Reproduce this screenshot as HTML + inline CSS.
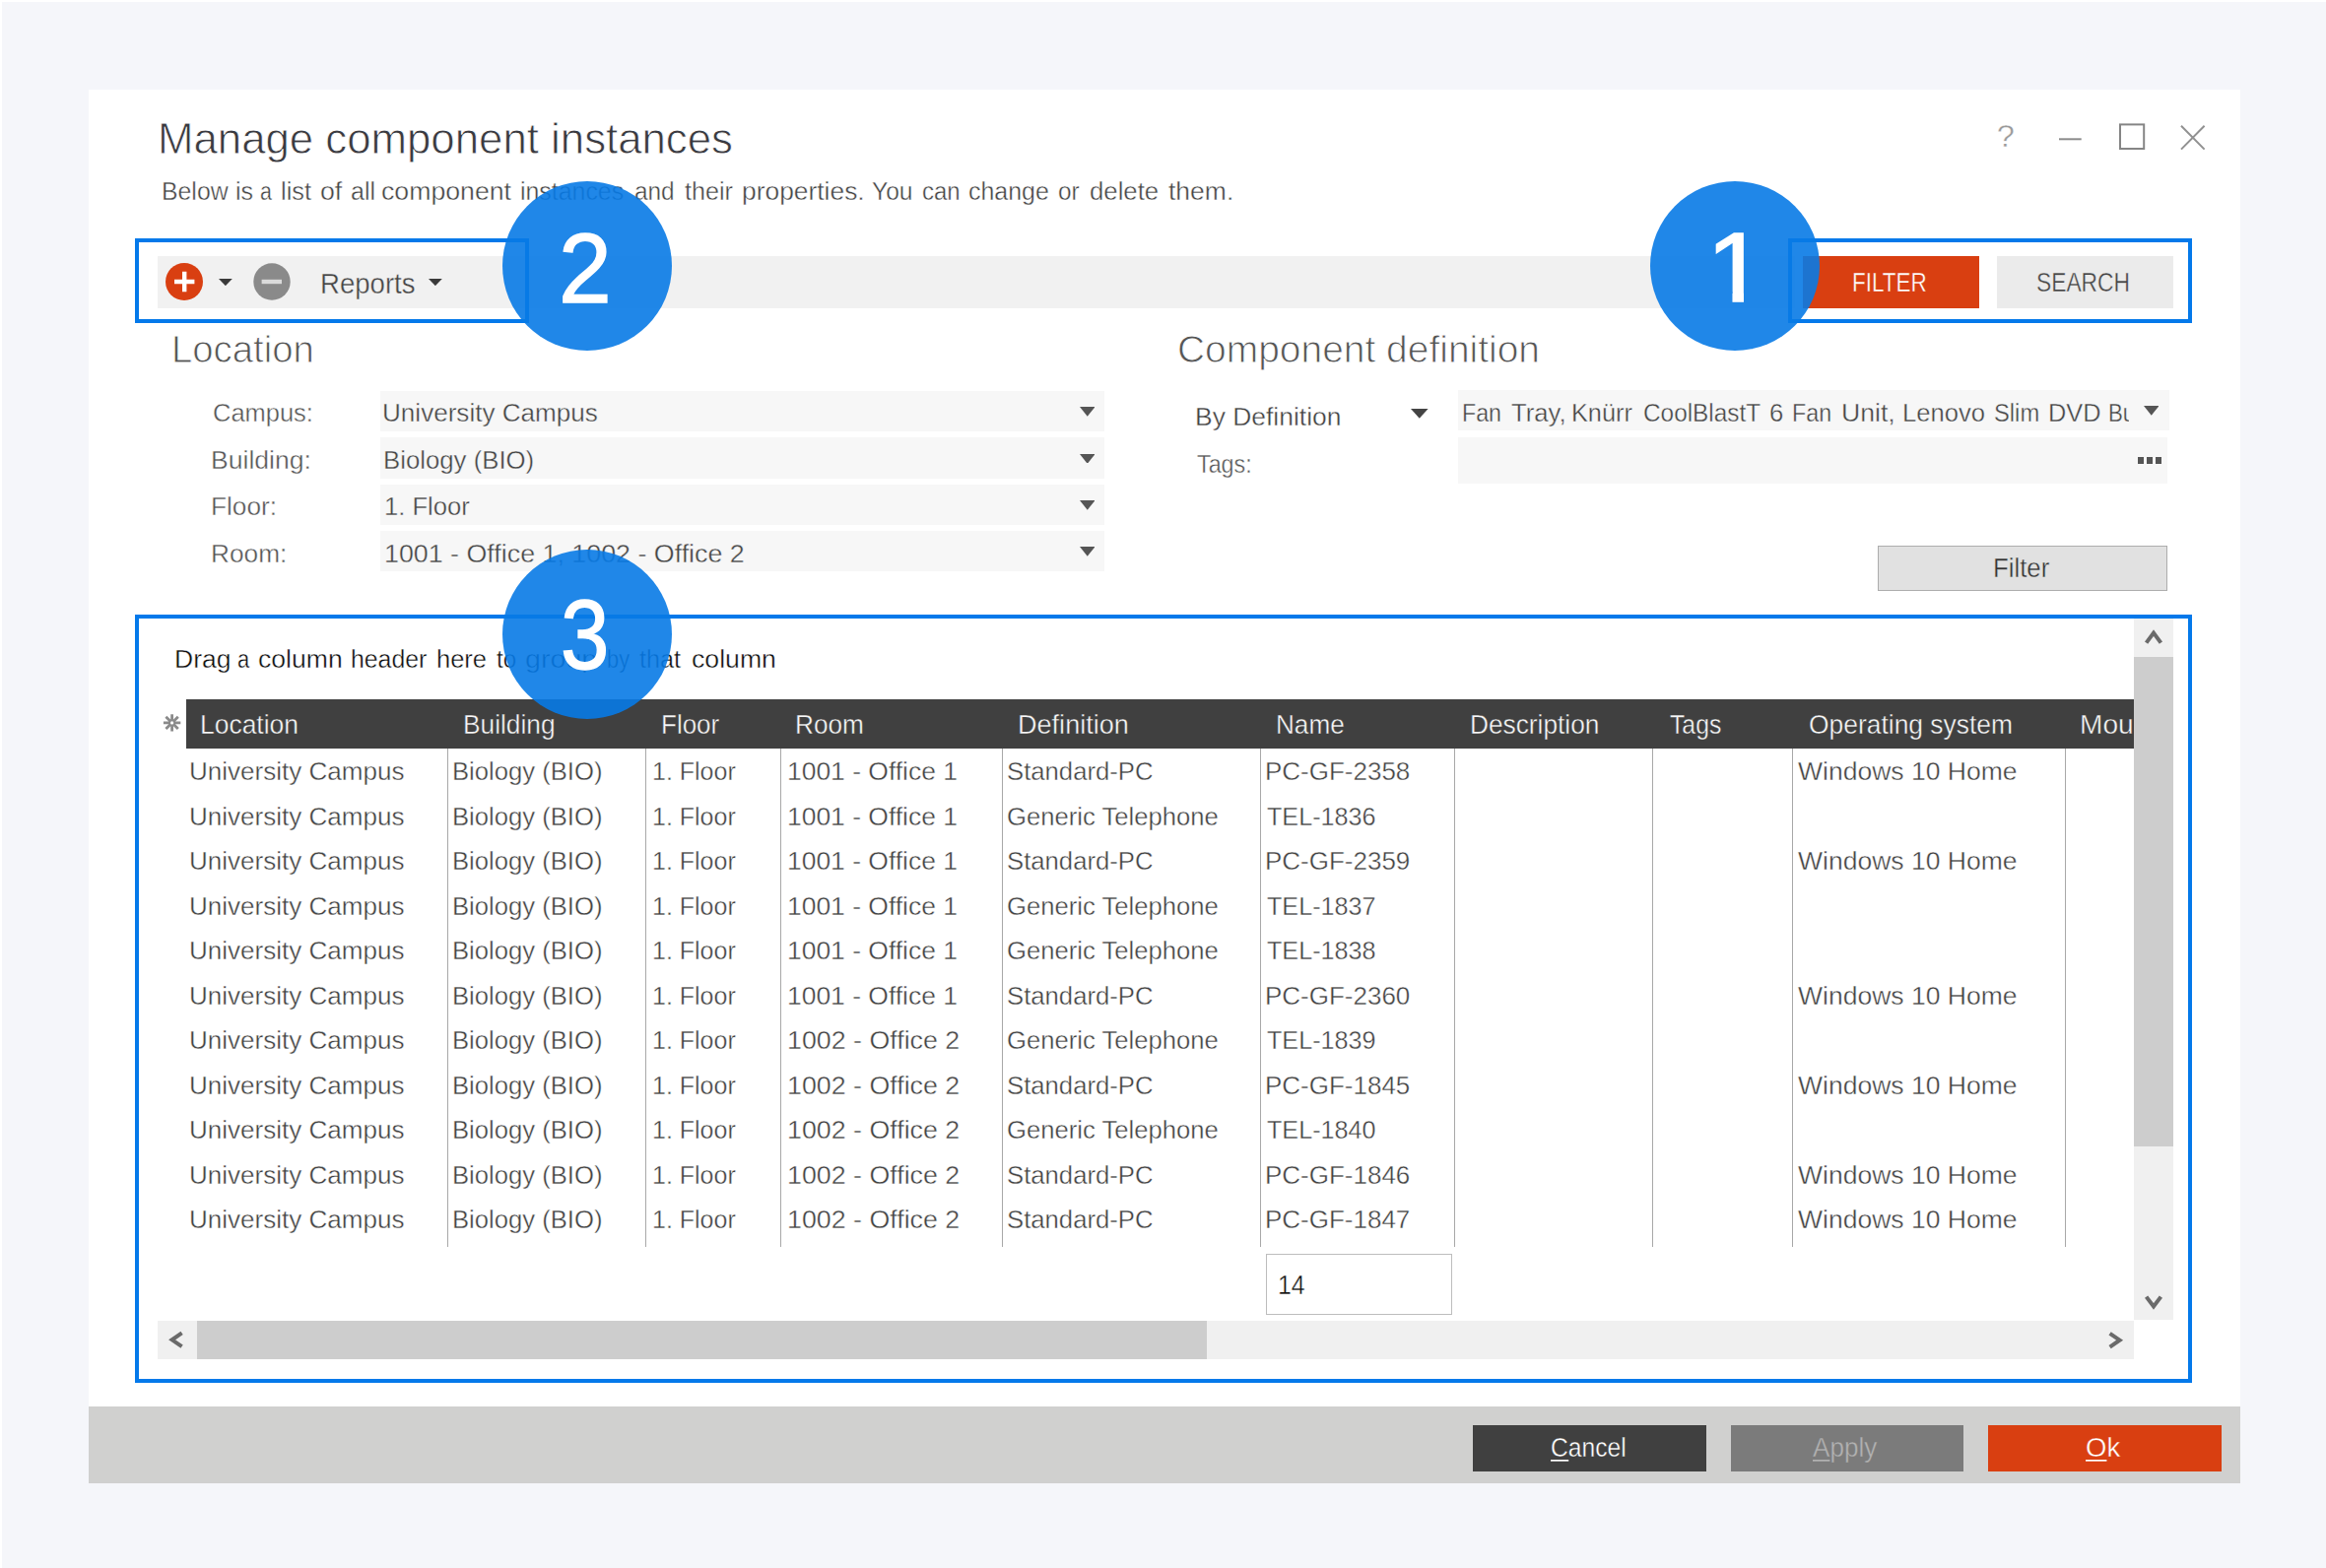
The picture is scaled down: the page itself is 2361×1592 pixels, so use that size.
<!DOCTYPE html>
<html lang="en"><head><meta charset="utf-8"><title>Manage component instances</title>
<style>html,body{margin:0;padding:0}body{width:2361px;height:1592px;position:relative;overflow:hidden;background:#f5f6fa;font-family:"Liberation Sans", sans-serif;-webkit-font-smoothing:antialiased}.b{position:absolute;display:block}.t{position:absolute;display:block;white-space:pre;line-height:1;transform-origin:0 0;text-underline-offset:2px}.u{background:linear-gradient(currentColor,currentColor) no-repeat 0 calc(100% - 1.4px)/100% 1.7px}</style></head>
<body>
<div class="b" style="left:0.0px;top:0.0px;width:2361.0px;height:2.3px;background:#fff;"></div>
<div class="b" style="left:0.0px;top:0.0px;width:2.0px;height:1592.0px;background:#fff;"></div>
<div class="b" style="left:90.0px;top:91.0px;width:2184.0px;height:1415.0px;background:#fff;"></div>
<div class="b" style="left:90.0px;top:1428.0px;width:2184.0px;height:78.0px;background:#d0d0cf;"></div>
<div class="b" style="left:160.0px;top:260.0px;width:1662.0px;height:53.0px;background:#f1f1f1;"></div>
<div class="b" style="left:1830.3px;top:260.0px;width:178.3px;height:52.8px;background:#d93f11;"></div>
<div class="b" style="left:2027.3px;top:260.0px;width:178.5px;height:53.0px;background:#ebebeb;"></div>
<svg class="b" style="left:166px;top:265px" width="132" height="42" viewBox="166 265 132 42"><circle cx="187" cy="286" r="19" fill="#d93f11"/><path d="M177 286H197.4M187.2 275.8V296.2" stroke="#fff" stroke-width="4.4" fill="none"/><circle cx="276" cy="286" r="18.7" fill="#8a8a8a"/><path d="M265.6 286H286" stroke="#dadada" stroke-width="4.4" fill="none"/></svg>
<svg class="b" style="left:222.4px;top:283.0px" width="13.8" height="7.2" viewBox="0 0 13.8 7.2"><path d="M0 0H13.8L6.90 7.2Z" fill="#3a3a3a"/></svg>
<svg class="b" style="left:434.8px;top:283.0px" width="13.8" height="7.2" viewBox="0 0 13.8 7.2"><path d="M0 0H13.8L6.90 7.2Z" fill="#3a3a3a"/></svg>
<svg class="b" style="left:2080px;top:118px" width="170" height="42" viewBox="2080 118 170 42" fill="none" stroke-width="2"><path d="M2090 141.3H2112.7" stroke="#8c8c8c"/><rect x="2152" y="126.4" width="24.2" height="24.6" stroke="#858585"/><path d="M2214 127.8L2237.6 151.6M2237.6 127.8L2214 151.6" stroke="#919191"/></svg>
<div class="b" style="left:386.0px;top:396.6px;width:735.2px;height:41.3px;background:#f7f7f7;"></div>
<svg class="b" style="left:1095.5px;top:412.9px" width="15.5" height="9.8" viewBox="0 0 15.5 9.8"><path d="M0 0H15.5L7.75 9.8Z" fill="#555"/></svg>
<div class="b" style="left:386.0px;top:444.3px;width:735.2px;height:41.3px;background:#f7f7f7;"></div>
<svg class="b" style="left:1095.5px;top:460.6px" width="15.5" height="9.8" viewBox="0 0 15.5 9.8"><path d="M0 0H15.5L7.75 9.8Z" fill="#555"/></svg>
<div class="b" style="left:386.0px;top:491.5px;width:735.2px;height:41.3px;background:#f7f7f7;"></div>
<svg class="b" style="left:1095.5px;top:507.8px" width="15.5" height="9.8" viewBox="0 0 15.5 9.8"><path d="M0 0H15.5L7.75 9.8Z" fill="#555"/></svg>
<div class="b" style="left:386.0px;top:538.7px;width:735.2px;height:41.3px;background:#f7f7f7;"></div>
<svg class="b" style="left:1095.5px;top:555.0px" width="15.5" height="9.8" viewBox="0 0 15.5 9.8"><path d="M0 0H15.5L7.75 9.8Z" fill="#555"/></svg>
<div class="b" style="left:1479.8px;top:396.2px;width:721.9px;height:41.3px;background:#f7f7f7;"></div>
<svg class="b" style="left:2175.9px;top:412.2px" width="15.5" height="9.8" viewBox="0 0 15.5 9.8"><path d="M0 0H15.5L7.75 9.8Z" fill="#555"/></svg>
<svg class="b" style="left:1432.0px;top:415.4px" width="17.6" height="9.8" viewBox="0 0 17.6 9.8"><path d="M0 0H17.6L8.80 9.8Z" fill="#444"/></svg>
<div class="b" style="left:1479.8px;top:444.0px;width:720.6px;height:46.9px;background:#f7f7f7;"></div>
<div class="b" style="left:2169.6px;top:463.8px;width:6.6px;height:7.0px;background:#555;"></div>
<div class="b" style="left:2178.7px;top:463.8px;width:6.6px;height:7.0px;background:#555;"></div>
<div class="b" style="left:2187.8px;top:463.8px;width:6.6px;height:7.0px;background:#555;"></div>
<div class="b" style="left:1479.8px;top:396.2px;width:680.8px;height:41.3px;overflow:hidden"><span class="t" style="-webkit-text-stroke:0.38px #f7f7f7;left:659.9px;top:9.8px;font-size:26.5px;color:#444;transform:scaleX(0.8400)">Burner</span></div>
<div class="b" style="left:1906.3px;top:554.1px;width:293.6px;height:46.4px;background:#e1e1e1;box-sizing:border-box;border:1.6px solid #adadad"></div>
<div class="b" style="left:188.9px;top:709.5px;width:1977.1px;height:50.3px;background:#404040;overflow:hidden"><span class="t" style="-webkit-text-stroke:0.38px #404040;left:1922.2px;top:13.5px;font-size:27px;color:#f6f6f6;transform:scaleX(1.0403)">Mount</span></div>
<svg class="b" style="left:164px;top:723px" width="22" height="22" viewBox="164 723 22 22"><g stroke="#8a8a8a" stroke-width="2.8" fill="none"><path d="M174.6 725.2V742.6M165.9 733.9H183.3M168.4 727.7L180.8 740.1M180.8 727.7L168.4 740.1"/></g><circle cx="174.6" cy="733.9" r="1.6" fill="#fff"/></svg>
<div class="b" style="left:454.0px;top:759.8px;width:1.3px;height:506.6px;background:#a8a8a8;"></div>
<div class="b" style="left:655.0px;top:759.8px;width:1.3px;height:506.6px;background:#a8a8a8;"></div>
<div class="b" style="left:792.0px;top:759.8px;width:1.3px;height:506.6px;background:#a8a8a8;"></div>
<div class="b" style="left:1017.0px;top:759.8px;width:1.3px;height:506.6px;background:#a8a8a8;"></div>
<div class="b" style="left:1279.0px;top:759.8px;width:1.3px;height:506.6px;background:#a8a8a8;"></div>
<div class="b" style="left:1476.0px;top:759.8px;width:1.3px;height:506.6px;background:#a8a8a8;"></div>
<div class="b" style="left:1677.0px;top:759.8px;width:1.3px;height:506.6px;background:#a8a8a8;"></div>
<div class="b" style="left:1819.0px;top:759.8px;width:1.3px;height:506.6px;background:#a8a8a8;"></div>
<div class="b" style="left:2096.0px;top:759.8px;width:1.3px;height:506.6px;background:#a8a8a8;"></div>
<div class="b" style="left:1284.5px;top:1272.5px;width:189.2px;height:62.3px;background:#fff;box-sizing:border-box;border:1.6px solid #bdbdbd"></div>
<div class="b" style="left:2166.0px;top:628.0px;width:39.7px;height:711.5px;background:#f0f0f0;"></div>
<div class="b" style="left:2166.0px;top:667.3px;width:39.7px;height:497.1px;background:#cdcdcd;"></div>
<div class="b" style="left:160.4px;top:1340.5px;width:2005.6px;height:39.5px;background:#f0f0f0;"></div>
<div class="b" style="left:199.6px;top:1340.5px;width:1025.4px;height:39.5px;background:#cdcdcd;"></div>
<svg class="b" style="left:2170px;top:632px" width="32" height="30" viewBox="2170 632 32 30"><path d="M2178.6 652.6L2186 642.6L2193.4 652.6" stroke="#6a6a6a" stroke-width="4" fill="none"/></svg>
<svg class="b" style="left:2170px;top:1308px" width="32" height="30" viewBox="2170 1308 32 30"><path d="M2178.6 1316.6L2186 1326.4L2193.4 1316.6" stroke="#6a6a6a" stroke-width="4" fill="none"/></svg>
<svg class="b" style="left:165px;top:1345px" width="30" height="32" viewBox="165 1345 30 32"><path d="M184.6 1353.4L174.6 1360.3L184.6 1367.2" stroke="#6a6a6a" stroke-width="4" fill="none"/></svg>
<svg class="b" style="left:2130px;top:1345px" width="32" height="32" viewBox="2130 1345 32 32"><path d="M2141.6 1353.8L2151.6 1360.7L2141.6 1367.6" stroke="#6a6a6a" stroke-width="4" fill="none"/></svg>
<div class="b" style="left:1495.0px;top:1447.0px;width:236.6px;height:47.0px;background:#404040;"></div>
<div class="b" style="left:1756.9px;top:1447.0px;width:236.5px;height:47.0px;background:#7b7b7b;"></div>
<div class="b" style="left:2018.0px;top:1447.0px;width:236.9px;height:47.0px;background:#d93f11;"></div>
<span class="t" style="-webkit-text-stroke:0.8px #fff;left:160.3px;top:119px;font-size:44px;color:#3a3a40;transform:scaleX(0.9948)">Manage component instances</span>
<span class="t" style="-webkit-text-stroke:0.38px #fff;left:163.5px;top:182px;font-size:25.4px;color:#444;transform:scaleX(0.9776)">Below</span>
<span class="t" style="-webkit-text-stroke:0.38px #fff;left:239.3px;top:182px;font-size:25.4px;color:#444;transform:scaleX(0.9855)">is</span>
<span class="t" style="-webkit-text-stroke:0.38px #fff;left:263.8px;top:182px;font-size:25.4px;color:#444;transform:scaleX(0.8400)">a</span>
<span class="t" style="-webkit-text-stroke:0.38px #fff;left:284.9px;top:182px;font-size:25.4px;color:#444;transform:scaleX(0.9974)">list</span>
<span class="t" style="-webkit-text-stroke:0.38px #fff;left:324.9px;top:182px;font-size:25.4px;color:#444;transform:scaleX(1.0511)">of</span>
<span class="t" style="-webkit-text-stroke:0.38px #fff;left:355.5px;top:182px;font-size:25.4px;color:#444;transform:scaleX(0.9841)">all</span>
<span class="t" style="-webkit-text-stroke:0.38px #fff;left:387.0px;top:182px;font-size:25.4px;color:#444;transform:scaleX(1.0508)">component</span>
<span class="t" style="-webkit-text-stroke:0.38px #fff;left:528.0px;top:182px;font-size:25.4px;color:#444;transform:scaleX(0.9804)">instances</span>
<span class="t" style="-webkit-text-stroke:0.38px #fff;left:644.0px;top:182px;font-size:25.4px;color:#444;transform:scaleX(0.9592)">and</span>
<span class="t" style="-webkit-text-stroke:0.38px #fff;left:695.0px;top:182px;font-size:25.4px;color:#444;transform:scaleX(0.9892)">their</span>
<span class="t" style="-webkit-text-stroke:0.38px #fff;left:753.3px;top:182px;font-size:25.4px;color:#444;transform:scaleX(1.0393)">properties.</span>
<span class="t" style="-webkit-text-stroke:0.38px #fff;left:885.3px;top:182px;font-size:25.4px;color:#444;transform:scaleX(0.9682)">You</span>
<span class="t" style="-webkit-text-stroke:0.38px #fff;left:935.5px;top:182px;font-size:25.4px;color:#444;transform:scaleX(0.9429)">can</span>
<span class="t" style="-webkit-text-stroke:0.38px #fff;left:983.3px;top:182px;font-size:25.4px;color:#444;transform:scaleX(0.9818)">change</span>
<span class="t" style="-webkit-text-stroke:0.38px #fff;left:1074.3px;top:182px;font-size:25.4px;color:#444;transform:scaleX(0.9584)">or</span>
<span class="t" style="-webkit-text-stroke:0.38px #fff;left:1106.0px;top:182px;font-size:25.4px;color:#444;transform:scaleX(1.0140)">delete</span>
<span class="t" style="-webkit-text-stroke:0.38px #fff;left:1185.8px;top:182px;font-size:25.4px;color:#444;transform:scaleX(1.0432)">them.</span>
<span class="t" style="-webkit-text-stroke:0.38px #f1f1f1;left:325.1px;top:274px;font-size:29px;color:#444;transform:scaleX(0.9511)">Reports</span>
<span class="t" style="-webkit-text-stroke:0.38px #d93f11;left:1880.0px;top:274px;font-size:26.8px;color:#fff;transform:scaleX(0.8400)">FILTER</span>
<span class="t" style="-webkit-text-stroke:0.38px #ebebeb;left:2067.1px;top:274px;font-size:26.8px;color:#444;transform:scaleX(0.8507)">SEARCH</span>
<span class="t" style="-webkit-text-stroke:0.9px #fff;left:174.0px;top:336px;font-size:38.5px;color:#555;transform:scaleX(0.9947)">Location</span>
<span class="t" style="-webkit-text-stroke:0.9px #fff;left:1195.0px;top:336px;font-size:38.5px;color:#555;transform:scaleX(1.0113)">Component definition</span>
<span class="t" style="-webkit-text-stroke:0.38px #fff;left:215.8px;top:406px;font-size:26.5px;color:#555;transform:scaleX(0.9613)">Campus:</span>
<span class="t" style="-webkit-text-stroke:0.38px #fff;left:214.3px;top:454px;font-size:26.5px;color:#555;transform:scaleX(1.0022)">Building:</span>
<span class="t" style="-webkit-text-stroke:0.38px #fff;left:214.3px;top:501px;font-size:26.5px;color:#555;transform:scaleX(0.9893)">Floor:</span>
<span class="t" style="-webkit-text-stroke:0.38px #fff;left:214.3px;top:549px;font-size:26.5px;color:#555;transform:scaleX(0.9907)">Room:</span>
<span class="t" style="-webkit-text-stroke:0.38px #f7f7f7;left:388.4px;top:406px;font-size:26.5px;color:#444;transform:scaleX(0.9840)">University Campus</span>
<span class="t" style="-webkit-text-stroke:0.38px #f7f7f7;left:388.5px;top:454px;font-size:26.5px;color:#444;transform:scaleX(0.9719)">Biology (BIO)</span>
<span class="t" style="-webkit-text-stroke:0.38px #f7f7f7;left:389.6px;top:501px;font-size:26.5px;color:#444;transform:scaleX(0.9658)">1. Floor</span>
<span class="t" style="-webkit-text-stroke:0.38px #f7f7f7;left:389.5px;top:549px;font-size:26.5px;color:#444;transform:scaleX(1.0121)">1001 - Office 1, 1002 - Office 2</span>
<span class="t" style="-webkit-text-stroke:0.38px #fff;left:1213.4px;top:410px;font-size:26.5px;color:#404040;transform:scaleX(0.9978)">By Definition</span>
<span class="t" style="-webkit-text-stroke:0.38px #fff;left:1215.4px;top:458px;font-size:26.5px;color:#555;transform:scaleX(0.8790)">Tags:</span>
<span class="t" style="-webkit-text-stroke:0.38px #f7f7f7;left:1483.7px;top:406px;font-size:26.5px;color:#444;transform:scaleX(0.8759)">Fan</span>
<span class="t" style="-webkit-text-stroke:0.38px #f7f7f7;left:1533.7px;top:406px;font-size:26.5px;color:#444;transform:scaleX(0.9682)">Tray,</span>
<span class="t" style="-webkit-text-stroke:0.38px #f7f7f7;left:1595.0px;top:406px;font-size:26.5px;color:#444;transform:scaleX(0.9543)">Knürr</span>
<span class="t" style="-webkit-text-stroke:0.38px #f7f7f7;left:1667.6px;top:406px;font-size:26.5px;color:#444;transform:scaleX(0.9189)">CoolBlastT</span>
<span class="t" style="-webkit-text-stroke:0.38px #f7f7f7;left:1796.0px;top:406px;font-size:26.5px;color:#444;transform:scaleX(0.9692)">6</span>
<span class="t" style="-webkit-text-stroke:0.38px #f7f7f7;left:1819.2px;top:406px;font-size:26.5px;color:#444;transform:scaleX(0.8783)">Fan</span>
<span class="t" style="-webkit-text-stroke:0.38px #f7f7f7;left:1868.7px;top:406px;font-size:26.5px;color:#444;transform:scaleX(1.0035)">Unit,</span>
<span class="t" style="-webkit-text-stroke:0.38px #f7f7f7;left:1930.5px;top:406px;font-size:26.5px;color:#444;transform:scaleX(0.9655)">Lenovo</span>
<span class="t" style="-webkit-text-stroke:0.38px #f7f7f7;left:2024.1px;top:406px;font-size:26.5px;color:#444;transform:scaleX(0.8959)">Slim</span>
<span class="t" style="-webkit-text-stroke:0.38px #f7f7f7;left:2078.6px;top:406px;font-size:26.5px;color:#444;transform:scaleX(0.9562)">DVD</span>
<span class="t" style="-webkit-text-stroke:0.38px #e1e1e1;left:2023.1px;top:564px;font-size:26.8px;color:#333;transform:scaleX(0.9614)">Filter</span>
<span class="t" style="-webkit-text-stroke:0.38px #fff;left:176.9px;top:656px;font-size:26px;color:#0c0c0c;transform:scaleX(1.0190)">Drag</span>
<span class="t" style="-webkit-text-stroke:0.38px #fff;left:240.9px;top:656px;font-size:26px;color:#0c0c0c;transform:scaleX(0.8400)">a</span>
<span class="t" style="-webkit-text-stroke:0.38px #fff;left:262.4px;top:656px;font-size:26px;color:#0c0c0c;transform:scaleX(1.0227)">column</span>
<span class="t" style="-webkit-text-stroke:0.38px #fff;left:356.4px;top:656px;font-size:26px;color:#0c0c0c;transform:scaleX(0.9552)">header</span>
<span class="t" style="-webkit-text-stroke:0.38px #fff;left:443.1px;top:656px;font-size:26px;color:#0c0c0c;transform:scaleX(0.9807)">here</span>
<span class="t" style="-webkit-text-stroke:0.38px #fff;left:503.7px;top:656px;font-size:26px;color:#0c0c0c;transform:scaleX(0.9329)">to</span>
<span class="t" style="-webkit-text-stroke:0.38px #fff;left:533.2px;top:656px;font-size:26px;color:#0c0c0c;transform:scaleX(1.1024)">group</span>
<span class="t" style="-webkit-text-stroke:0.38px #fff;left:615.8px;top:656px;font-size:26px;color:#0c0c0c;transform:scaleX(0.8400)">by</span>
<span class="t" style="-webkit-text-stroke:0.38px #fff;left:649.4px;top:656px;font-size:26px;color:#0c0c0c;transform:scaleX(0.9696)">that</span>
<span class="t" style="-webkit-text-stroke:0.38px #fff;left:702.0px;top:656px;font-size:26px;color:#0c0c0c;transform:scaleX(1.0251)">column</span>
<span class="t" style="-webkit-text-stroke:0.38px #404040;left:202.5px;top:723px;font-size:27px;color:#f6f6f6;transform:scaleX(0.9792)">Location</span>
<span class="t" style="-webkit-text-stroke:0.38px #404040;left:470.1px;top:723px;font-size:27px;color:#f6f6f6;transform:scaleX(0.9736)">Building</span>
<span class="t" style="-webkit-text-stroke:0.38px #404040;left:671.1px;top:723px;font-size:27px;color:#f6f6f6;transform:scaleX(0.9626)">Floor</span>
<span class="t" style="-webkit-text-stroke:0.38px #404040;left:807.4px;top:723px;font-size:27px;color:#f6f6f6;transform:scaleX(0.9704)">Room</span>
<span class="t" style="-webkit-text-stroke:0.38px #404040;left:1033.2px;top:723px;font-size:27px;color:#f6f6f6;transform:scaleX(1.0023)">Definition</span>
<span class="t" style="-webkit-text-stroke:0.38px #404040;left:1295.1px;top:723px;font-size:27px;color:#f6f6f6;transform:scaleX(0.9680)">Name</span>
<span class="t" style="-webkit-text-stroke:0.38px #404040;left:1492.1px;top:723px;font-size:27px;color:#f6f6f6;transform:scaleX(0.9732)">Description</span>
<span class="t" style="-webkit-text-stroke:0.38px #404040;left:1694.7px;top:723px;font-size:27px;color:#f6f6f6;transform:scaleX(0.9163)">Tags</span>
<span class="t" style="-webkit-text-stroke:0.38px #404040;left:1835.8px;top:723px;font-size:27px;color:#f6f6f6;transform:scaleX(0.9785)">Operating system</span>
<span class="t" style="-webkit-text-stroke:0.38px #fff;left:191.8px;top:770px;font-size:26.5px;color:#424242;transform:scaleX(0.9827)">University Campus</span>
<span class="t" style="-webkit-text-stroke:0.38px #fff;left:459.1px;top:770px;font-size:26.5px;color:#424242;transform:scaleX(0.9674)">Biology (BIO)</span>
<span class="t" style="-webkit-text-stroke:0.38px #fff;left:662.1px;top:770px;font-size:26.5px;color:#424242;transform:scaleX(0.9430)">1. Floor</span>
<span class="t" style="-webkit-text-stroke:0.38px #fff;left:798.5px;top:770px;font-size:26.5px;color:#424242;transform:scaleX(0.9977)">1001 - Office 1</span>
<span class="t" style="-webkit-text-stroke:0.38px #fff;left:1022.2px;top:770px;font-size:26.5px;color:#424242;transform:scaleX(0.9694)">Standard-PC</span>
<span class="t" style="-webkit-text-stroke:0.38px #fff;left:1283.9px;top:770px;font-size:26.5px;color:#424242;transform:scaleX(0.9805)">PC-GF-2358</span>
<span class="t" style="-webkit-text-stroke:0.38px #fff;left:1825.0px;top:770px;font-size:26.5px;color:#424242;transform:scaleX(1.0007)">Windows 10 Home</span>
<span class="t" style="-webkit-text-stroke:0.38px #fff;left:191.8px;top:816px;font-size:26.5px;color:#424242;transform:scaleX(0.9827)">University Campus</span>
<span class="t" style="-webkit-text-stroke:0.38px #fff;left:459.1px;top:816px;font-size:26.5px;color:#424242;transform:scaleX(0.9674)">Biology (BIO)</span>
<span class="t" style="-webkit-text-stroke:0.38px #fff;left:662.1px;top:816px;font-size:26.5px;color:#424242;transform:scaleX(0.9430)">1. Floor</span>
<span class="t" style="-webkit-text-stroke:0.38px #fff;left:798.5px;top:816px;font-size:26.5px;color:#424242;transform:scaleX(0.9977)">1001 - Office 1</span>
<span class="t" style="-webkit-text-stroke:0.38px #fff;left:1022.2px;top:816px;font-size:26.5px;color:#424242;transform:scaleX(0.9678)">Generic Telephone</span>
<span class="t" style="-webkit-text-stroke:0.38px #fff;left:1285.6px;top:816px;font-size:26.5px;color:#424242;transform:scaleX(0.9495)">TEL-1836</span>
<span class="t" style="-webkit-text-stroke:0.38px #fff;left:191.8px;top:861px;font-size:26.5px;color:#424242;transform:scaleX(0.9827)">University Campus</span>
<span class="t" style="-webkit-text-stroke:0.38px #fff;left:459.1px;top:861px;font-size:26.5px;color:#424242;transform:scaleX(0.9674)">Biology (BIO)</span>
<span class="t" style="-webkit-text-stroke:0.38px #fff;left:662.1px;top:861px;font-size:26.5px;color:#424242;transform:scaleX(0.9430)">1. Floor</span>
<span class="t" style="-webkit-text-stroke:0.38px #fff;left:798.5px;top:861px;font-size:26.5px;color:#424242;transform:scaleX(0.9977)">1001 - Office 1</span>
<span class="t" style="-webkit-text-stroke:0.38px #fff;left:1022.2px;top:861px;font-size:26.5px;color:#424242;transform:scaleX(0.9694)">Standard-PC</span>
<span class="t" style="-webkit-text-stroke:0.38px #fff;left:1283.9px;top:861px;font-size:26.5px;color:#424242;transform:scaleX(0.9805)">PC-GF-2359</span>
<span class="t" style="-webkit-text-stroke:0.38px #fff;left:1825.0px;top:861px;font-size:26.5px;color:#424242;transform:scaleX(1.0007)">Windows 10 Home</span>
<span class="t" style="-webkit-text-stroke:0.38px #fff;left:191.8px;top:907px;font-size:26.5px;color:#424242;transform:scaleX(0.9827)">University Campus</span>
<span class="t" style="-webkit-text-stroke:0.38px #fff;left:459.1px;top:907px;font-size:26.5px;color:#424242;transform:scaleX(0.9674)">Biology (BIO)</span>
<span class="t" style="-webkit-text-stroke:0.38px #fff;left:662.1px;top:907px;font-size:26.5px;color:#424242;transform:scaleX(0.9430)">1. Floor</span>
<span class="t" style="-webkit-text-stroke:0.38px #fff;left:798.5px;top:907px;font-size:26.5px;color:#424242;transform:scaleX(0.9977)">1001 - Office 1</span>
<span class="t" style="-webkit-text-stroke:0.38px #fff;left:1022.2px;top:907px;font-size:26.5px;color:#424242;transform:scaleX(0.9678)">Generic Telephone</span>
<span class="t" style="-webkit-text-stroke:0.38px #fff;left:1285.6px;top:907px;font-size:26.5px;color:#424242;transform:scaleX(0.9495)">TEL-1837</span>
<span class="t" style="-webkit-text-stroke:0.38px #fff;left:191.8px;top:952px;font-size:26.5px;color:#424242;transform:scaleX(0.9827)">University Campus</span>
<span class="t" style="-webkit-text-stroke:0.38px #fff;left:459.1px;top:952px;font-size:26.5px;color:#424242;transform:scaleX(0.9674)">Biology (BIO)</span>
<span class="t" style="-webkit-text-stroke:0.38px #fff;left:662.1px;top:952px;font-size:26.5px;color:#424242;transform:scaleX(0.9430)">1. Floor</span>
<span class="t" style="-webkit-text-stroke:0.38px #fff;left:798.5px;top:952px;font-size:26.5px;color:#424242;transform:scaleX(0.9977)">1001 - Office 1</span>
<span class="t" style="-webkit-text-stroke:0.38px #fff;left:1022.2px;top:952px;font-size:26.5px;color:#424242;transform:scaleX(0.9678)">Generic Telephone</span>
<span class="t" style="-webkit-text-stroke:0.38px #fff;left:1285.6px;top:952px;font-size:26.5px;color:#424242;transform:scaleX(0.9495)">TEL-1838</span>
<span class="t" style="-webkit-text-stroke:0.38px #fff;left:191.8px;top:998px;font-size:26.5px;color:#424242;transform:scaleX(0.9827)">University Campus</span>
<span class="t" style="-webkit-text-stroke:0.38px #fff;left:459.1px;top:998px;font-size:26.5px;color:#424242;transform:scaleX(0.9674)">Biology (BIO)</span>
<span class="t" style="-webkit-text-stroke:0.38px #fff;left:662.1px;top:998px;font-size:26.5px;color:#424242;transform:scaleX(0.9430)">1. Floor</span>
<span class="t" style="-webkit-text-stroke:0.38px #fff;left:798.5px;top:998px;font-size:26.5px;color:#424242;transform:scaleX(0.9977)">1001 - Office 1</span>
<span class="t" style="-webkit-text-stroke:0.38px #fff;left:1022.2px;top:998px;font-size:26.5px;color:#424242;transform:scaleX(0.9694)">Standard-PC</span>
<span class="t" style="-webkit-text-stroke:0.38px #fff;left:1283.9px;top:998px;font-size:26.5px;color:#424242;transform:scaleX(0.9805)">PC-GF-2360</span>
<span class="t" style="-webkit-text-stroke:0.38px #fff;left:1825.0px;top:998px;font-size:26.5px;color:#424242;transform:scaleX(1.0007)">Windows 10 Home</span>
<span class="t" style="-webkit-text-stroke:0.38px #fff;left:191.8px;top:1043px;font-size:26.5px;color:#424242;transform:scaleX(0.9827)">University Campus</span>
<span class="t" style="-webkit-text-stroke:0.38px #fff;left:459.1px;top:1043px;font-size:26.5px;color:#424242;transform:scaleX(0.9674)">Biology (BIO)</span>
<span class="t" style="-webkit-text-stroke:0.38px #fff;left:662.1px;top:1043px;font-size:26.5px;color:#424242;transform:scaleX(0.9430)">1. Floor</span>
<span class="t" style="-webkit-text-stroke:0.38px #fff;left:798.5px;top:1043px;font-size:26.5px;color:#424242;transform:scaleX(1.0111)">1002 - Office 2</span>
<span class="t" style="-webkit-text-stroke:0.38px #fff;left:1022.2px;top:1043px;font-size:26.5px;color:#424242;transform:scaleX(0.9678)">Generic Telephone</span>
<span class="t" style="-webkit-text-stroke:0.38px #fff;left:1285.6px;top:1043px;font-size:26.5px;color:#424242;transform:scaleX(0.9495)">TEL-1839</span>
<span class="t" style="-webkit-text-stroke:0.38px #fff;left:191.8px;top:1089px;font-size:26.5px;color:#424242;transform:scaleX(0.9827)">University Campus</span>
<span class="t" style="-webkit-text-stroke:0.38px #fff;left:459.1px;top:1089px;font-size:26.5px;color:#424242;transform:scaleX(0.9674)">Biology (BIO)</span>
<span class="t" style="-webkit-text-stroke:0.38px #fff;left:662.1px;top:1089px;font-size:26.5px;color:#424242;transform:scaleX(0.9430)">1. Floor</span>
<span class="t" style="-webkit-text-stroke:0.38px #fff;left:798.5px;top:1089px;font-size:26.5px;color:#424242;transform:scaleX(1.0111)">1002 - Office 2</span>
<span class="t" style="-webkit-text-stroke:0.38px #fff;left:1022.2px;top:1089px;font-size:26.5px;color:#424242;transform:scaleX(0.9694)">Standard-PC</span>
<span class="t" style="-webkit-text-stroke:0.38px #fff;left:1283.9px;top:1089px;font-size:26.5px;color:#424242;transform:scaleX(0.9805)">PC-GF-1845</span>
<span class="t" style="-webkit-text-stroke:0.38px #fff;left:1825.0px;top:1089px;font-size:26.5px;color:#424242;transform:scaleX(1.0007)">Windows 10 Home</span>
<span class="t" style="-webkit-text-stroke:0.38px #fff;left:191.8px;top:1134px;font-size:26.5px;color:#424242;transform:scaleX(0.9827)">University Campus</span>
<span class="t" style="-webkit-text-stroke:0.38px #fff;left:459.1px;top:1134px;font-size:26.5px;color:#424242;transform:scaleX(0.9674)">Biology (BIO)</span>
<span class="t" style="-webkit-text-stroke:0.38px #fff;left:662.1px;top:1134px;font-size:26.5px;color:#424242;transform:scaleX(0.9430)">1. Floor</span>
<span class="t" style="-webkit-text-stroke:0.38px #fff;left:798.5px;top:1134px;font-size:26.5px;color:#424242;transform:scaleX(1.0111)">1002 - Office 2</span>
<span class="t" style="-webkit-text-stroke:0.38px #fff;left:1022.2px;top:1134px;font-size:26.5px;color:#424242;transform:scaleX(0.9678)">Generic Telephone</span>
<span class="t" style="-webkit-text-stroke:0.38px #fff;left:1285.6px;top:1134px;font-size:26.5px;color:#424242;transform:scaleX(0.9495)">TEL-1840</span>
<span class="t" style="-webkit-text-stroke:0.38px #fff;left:191.8px;top:1180px;font-size:26.5px;color:#424242;transform:scaleX(0.9827)">University Campus</span>
<span class="t" style="-webkit-text-stroke:0.38px #fff;left:459.1px;top:1180px;font-size:26.5px;color:#424242;transform:scaleX(0.9674)">Biology (BIO)</span>
<span class="t" style="-webkit-text-stroke:0.38px #fff;left:662.1px;top:1180px;font-size:26.5px;color:#424242;transform:scaleX(0.9430)">1. Floor</span>
<span class="t" style="-webkit-text-stroke:0.38px #fff;left:798.5px;top:1180px;font-size:26.5px;color:#424242;transform:scaleX(1.0111)">1002 - Office 2</span>
<span class="t" style="-webkit-text-stroke:0.38px #fff;left:1022.2px;top:1180px;font-size:26.5px;color:#424242;transform:scaleX(0.9694)">Standard-PC</span>
<span class="t" style="-webkit-text-stroke:0.38px #fff;left:1283.9px;top:1180px;font-size:26.5px;color:#424242;transform:scaleX(0.9805)">PC-GF-1846</span>
<span class="t" style="-webkit-text-stroke:0.38px #fff;left:1825.0px;top:1180px;font-size:26.5px;color:#424242;transform:scaleX(1.0007)">Windows 10 Home</span>
<span class="t" style="-webkit-text-stroke:0.38px #fff;left:191.8px;top:1225px;font-size:26.5px;color:#424242;transform:scaleX(0.9827)">University Campus</span>
<span class="t" style="-webkit-text-stroke:0.38px #fff;left:459.1px;top:1225px;font-size:26.5px;color:#424242;transform:scaleX(0.9674)">Biology (BIO)</span>
<span class="t" style="-webkit-text-stroke:0.38px #fff;left:662.1px;top:1225px;font-size:26.5px;color:#424242;transform:scaleX(0.9430)">1. Floor</span>
<span class="t" style="-webkit-text-stroke:0.38px #fff;left:798.5px;top:1225px;font-size:26.5px;color:#424242;transform:scaleX(1.0111)">1002 - Office 2</span>
<span class="t" style="-webkit-text-stroke:0.38px #fff;left:1022.2px;top:1225px;font-size:26.5px;color:#424242;transform:scaleX(0.9694)">Standard-PC</span>
<span class="t" style="-webkit-text-stroke:0.38px #fff;left:1283.9px;top:1225px;font-size:26.5px;color:#424242;transform:scaleX(0.9805)">PC-GF-1847</span>
<span class="t" style="-webkit-text-stroke:0.38px #fff;left:1825.0px;top:1225px;font-size:26.5px;color:#424242;transform:scaleX(1.0007)">Windows 10 Home</span>
<span class="t" style="-webkit-text-stroke:0.38px #fff;left:1296.9px;top:1292px;font-size:27px;color:#111;transform:scaleX(0.9209)">14</span>
<span class="t" style="-webkit-text-stroke:0.38px #404040;left:1573.9px;top:1457px;font-size:27px;color:#fff;transform:scaleX(0.9117)"><span class="u">C</span>ancel</span>
<span class="t" style="-webkit-text-stroke:0.38px #7b7b7b;left:1840.3px;top:1457px;font-size:27px;color:#b2b2b2;transform:scaleX(0.9656)"><span class="u">A</span>pply</span>
<span class="t" style="-webkit-text-stroke:0.38px #d93f11;left:2117.0px;top:1457px;font-size:27px;color:#fff;transform:scaleX(1.0205)"><span class="u">O</span>k</span>
<span class="t" style="-webkit-text-stroke:0.38px #fff;left:2027.0px;top:122px;font-size:32px;color:#999;transform:scaleX(1.0000)">?</span>
<div class="b" style="left:137.0px;top:242.0px;width:400.0px;height:86.0px;background:transparent;box-sizing:border-box;border:4px solid #0479ea"></div>
<div class="b" style="left:1815.0px;top:242.0px;width:410.0px;height:86.0px;background:transparent;box-sizing:border-box;border:4px solid #0479ea"></div>
<div class="b" style="left:137.0px;top:624.0px;width:2088.0px;height:780.0px;background:transparent;box-sizing:border-box;border:4px solid #0479ea"></div>
<div class="b" style="left:1675.0px;top:184.4px;width:172px;height:172px;border-radius:50%;background:rgba(8,122,230,.9)"></div>
<div class="b" style="left:510.3px;top:184.4px;width:172px;height:172px;border-radius:50%;background:rgba(8,122,230,.9)"></div>
<div class="b" style="left:510.3px;top:558.0px;width:172px;height:172px;border-radius:50%;background:rgba(8,122,230,.9)"></div>
<span class="t" style="-webkit-text-stroke:1.4px #fff;clip-path:polygon(0 0,57px 0,57px 75.6px,35.2px 75.6px,35.2px 101px,24.5px 101px,24.5px 75.6px,0 75.6px);left:1732.0px;top:221px;font-size:101px;color:#fff;transform:scaleX(1.0800)">1</span>
<span class="t" style="-webkit-text-stroke:1.4px #fff;left:567.2px;top:222px;font-size:101px;color:#fff;transform:scaleX(0.9574)">2</span>
<span class="t" style="-webkit-text-stroke:1.4px #fff;left:569.4px;top:594px;font-size:101px;color:#fff;transform:scaleX(0.8776)">3</span>
</body></html>
